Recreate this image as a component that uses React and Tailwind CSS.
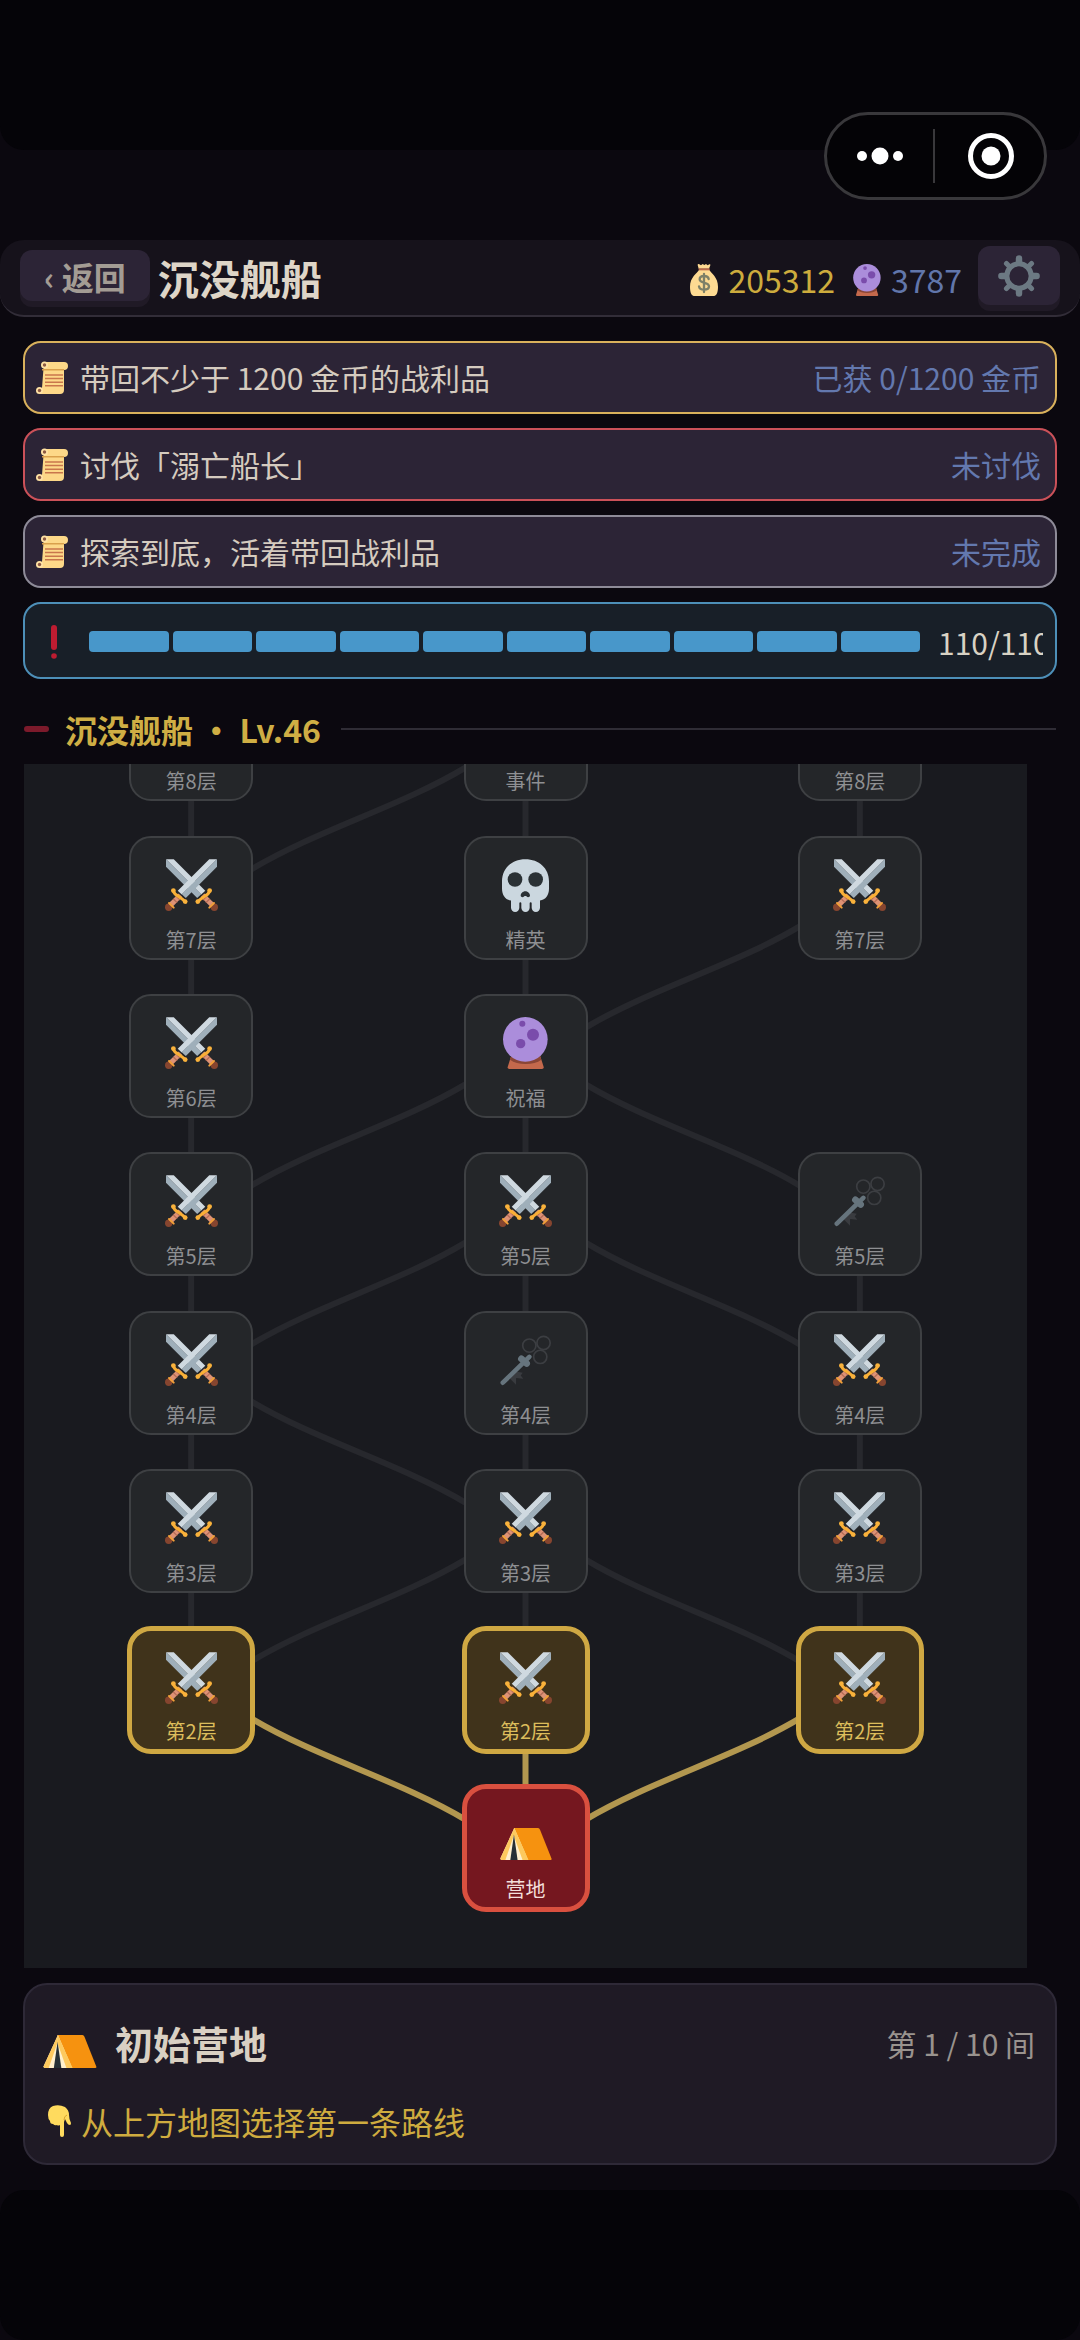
const ROW_PITCH = 158.4;
const MAP_HEIGHT = 1320;
const MAP_WIDTH = 1003;
const BASE_OFFSET = 120;

const quests = [
	{ text: "带回不少于 1200 金币的战利品", status: "已获 0/1200 金币", border: "border-[#d9b15c]" },
	{ text: "讨伐「溺亡船长」", status: "未讨伐", border: "border-[#cb5159]" },
	{ text: "探索到底，活着带回战利品", status: "未完成", border: "border-[#8e8b98]" },
];

const nodes = [
	{ col: 0, floor: 8, type: "battle" },
	{ col: 1, floor: 8, type: "event", label: "事件" },
	{ col: 2, floor: 8, type: "battle" },
	{ col: 0, floor: 7, type: "battle" },
	{ col: 1, floor: 7, type: "elite", label: "精英" },
	{ col: 2, floor: 7, type: "battle" },
	{ col: 0, floor: 6, type: "battle" },
	{ col: 1, floor: 6, type: "blessing", label: "祝福" },
	{ col: 0, floor: 5, type: "battle" },
	{ col: 1, floor: 5, type: "battle" },
	{ col: 2, floor: 5, type: "key" },
	{ col: 0, floor: 4, type: "battle" },
	{ col: 1, floor: 4, type: "key" },
	{ col: 2, floor: 4, type: "battle" },
	{ col: 0, floor: 3, type: "battle" },
	{ col: 1, floor: 3, type: "battle" },
	{ col: 2, floor: 3, type: "battle" },
	{ col: 0, floor: 2, type: "battle", state: "open" },
	{ col: 1, floor: 2, type: "battle", state: "open" },
	{ col: 2, floor: 2, type: "battle", state: "open" },
	{ col: 1, floor: 1, type: "camp", label: "营地", state: "current" },
];

// [from col, from floor, to col, to floor]
const edges = [
	[0, 7, 0, 8], [0, 6, 0, 7], [0, 5, 0, 6], [0, 4, 0, 5], [0, 3, 0, 4], [0, 2, 0, 3],
	[1, 7, 1, 8], [1, 6, 1, 7], [1, 5, 1, 6], [1, 4, 1, 5], [1, 3, 1, 4], [1, 2, 1, 3],
	[2, 7, 2, 8], [2, 4, 2, 5], [2, 3, 2, 4], [2, 2, 2, 3],
	[0, 7, 1, 8], [1, 6, 2, 7], [0, 5, 1, 6], [2, 5, 1, 6], [0, 4, 1, 5], [2, 4, 1, 5],
	[1, 3, 0, 4], [0, 2, 1, 3], [2, 2, 1, 3],
	[1, 1, 0, 2], [1, 1, 1, 2], [1, 1, 2, 2],
];

const nodeX = (col) => (MAP_WIDTH / 6) * (col * 2 + 1);
const nodeY = (floor) => Math.round(MAP_HEIGHT - BASE_OFFSET - (floor - 1) * ROW_PITCH);

const edgePath = ([c1, f1, c2, f2]) => {
	const x1 = nodeX(c1);
	const y1 = nodeY(f1);
	const x2 = nodeX(c2);
	const y2 = nodeY(f2);
	if (c1 === c2) return `M${x1} ${y1}V${y2}`;

	// the curve runs between the sides of the two nodes
	const cut = 0.18;
	const ax = x1 + (x2 - x1) * cut;
	const ay = y1 + (y2 - y1) * cut;
	const bx = x2 - (x2 - x1) * cut;
	const by = y2 - (y2 - y1) * cut;
	const dx = bx - ax;
	const dy = by - ay;
	return `M${ax} ${ay}C${ax + dx * 0.3} ${ay + dy * 0.38} ${bx - dx * 0.3} ${by - dy * 0.38} ${bx} ${by}`;
};

const Sword = () => (
	<>
		<path d="M132 1h23L50 106 38 95z" fill="#cfd9e0" />
		<path d="M155 1v22L62 116 50 105z" fill="#9fafba" />
		<path d="M46 108 18 136" stroke="#dd9275" strokeWidth="15" />
		<path d="M33 110l12 12M25 119l11 11" stroke="#b46b57" strokeWidth="4" />
		<path d="M24 94q4 12 16 17 9 6 22 17" stroke="#f9af36" strokeWidth="9" strokeLinecap="round" fill="none" />
		<circle cx="25" cy="94" r="7" fill="#f9b23c" />
		<circle cx="60" cy="127" r="7" fill="#f9b23c" />
		<circle cx="11" cy="144" r="11" fill="#86452f" />
		<path d="M12 131l14 14" stroke="#f3a13a" strokeWidth="6" strokeLinecap="round" />
	</>
);

const SwordsIcon = ({ className }) => (
	<svg viewBox="0 0 158 155" className={className} aria-hidden="true">
		<g transform="matrix(-1 0 0 1 158 0)">
			<Sword />
		</g>
		<Sword />
	</svg>
);

const SkullIcon = ({ className }) => (
	<svg viewBox="0 0 141 158" className={className} aria-hidden="true">
		<path
			d="M70 0C111 0 141 27 141 66v22c0 20-10 34-27 36v22a12 12 0 0 1-25 0v-14a3 3 0 0 0-6 0v14a12 12 0 0 1-25 0v-14a3 3 0 0 0-6 0v14a12 12 0 0 1-25 0v-22C10 122 0 108 0 88V66C0 27 30 0 70 0z"
			fill="#cbd7df"
		/>
		<circle cx="39" cy="61" r="22" fill="#2a3135" />
		<circle cx="101" cy="61" r="22" fill="#2a3135" />
		<path d="M70 96c8 0 14 7 14 13 0 5-7 7-10 3-2-2-6-2-8 0-3 4-10 2-10-3 0-6 6-13 14-13z" fill="#2a3135" />
	</svg>
);

const CrystalIcon = ({ className }) => (
	<svg viewBox="0 0 135 156" className={className} aria-hidden="true">
		<path d="M26 112h84l12 38q1 6-5 6H19q-6 0-5-6z" fill="#c4694c" />
		<path d="M25 116h86l4 12q-18 13-47 13T21 128z" fill="#8a4636" />
		<circle cx="67" cy="67" r="67" fill="#ab8ddb" />
		<circle cx="58" cy="20" r="9" fill="#7a4cab" />
		<circle cx="90" cy="53" r="18" fill="#7a4cab" />
		<circle cx="53" cy="80" r="14" fill="#7a4cab" />
	</svg>
);

const KeyIcon = ({ className }) => (
	<svg viewBox="0 0 156 154" className={className} aria-hidden="true">
		<g fill="none" stroke="#3c3e42" strokeWidth="5">
			<circle cx="88" cy="32" r="20" />
			<circle cx="131" cy="24" r="20" />
			<circle cx="121" cy="66" r="20" />
		</g>
		<path d="M48 110l20 4-6 8 8 10-22-2v20l-22-22z" fill="#393b3f" />
		<path d="M8 144 88 66" stroke="#66747d" strokeWidth="14" strokeLinecap="round" />
		<path d="M64 72l16 14" stroke="#66747d" strokeWidth="20" strokeLinecap="round" />
	</svg>
);

const TentIcon = ({ className }) => (
	<svg viewBox="0 0 157 97" className={className} aria-hidden="true">
		<path d="M41 0h74q4 0 6 5l35 88q1 4-3 4H84z" fill="#f6920f" />
		<path d="M43 0 1 92q-1 5 4 5h80z" fill="#fff0cd" />
		<path d="M43 0 1 92q-1 5 4 5h11L42 22z" fill="#fdc95e" />
		<path d="M43 0 41 22l27 75h18z" fill="#fdc95e" />
		<path d="M42 20 31 97h22z" fill="#263036" />
	</svg>
);

const ScrollIcon = ({ className }) => (
	<svg viewBox="0 0 32 33" className={className} aria-hidden="true">
		<path d="M8 1h20a3.500 3.500 0 0 1 0 8v20q0 4-4 4H4V27h2z" fill="#fdd888" />
		<path d="M6 8h22v1.500H6z" fill="#d9a04c" />
		<circle cx="8.500" cy="4" r="3.500" fill="#ffe2a4" />
		<circle cx="8.500" cy="4" r="1.700" fill="#8d5a43" />
		<circle cx="3.500" cy="29.500" r="3.500" fill="#ffe2a4" />
		<circle cx="3.500" cy="29.500" r="1.700" fill="#8d5a43" />
		<path d="M9 14h18M9 17.600h18M9 21.200h18M9 24.800h18" stroke="#c9764c" strokeWidth="1.500" />
	</svg>
);

const MoneyIcon = ({ className }) => (
	<svg viewBox="0 0 84 96" className={className} aria-hidden="true">
		<path d="M26 14 23 3q0-4 5-2l5 3 5-4 5 3 5-3 5 4 5-3q4-1 3 3l-4 10z" fill="#fdda92" />
		<path d="M27 18h31c6 10 26 22 26 50 0 20-6 28-14 28H14C6 96 0 88 0 68c0-28 21-40 27-50z" fill="#fdda92" />
		<path d="M26 13h33v6H26z" fill="#b9694a" />
		<path
			d="M56 45c-1-6-6-9-14-9s-13 4-13 10c0 14 28 7 28 21 0 6-6 10-15 10s-14-4-15-10M42 30v54"
			fill="none"
			stroke="#7d8068"
			strokeWidth="7"
			strokeLinecap="round"
		/>
	</svg>
);

const GearIcon = ({ className }) => (
	<svg viewBox="0 0 124 124" className={className} aria-hidden="true">
		<g stroke="#6c7983" fill="none">
			<circle cx="62" cy="62" r="36" strokeWidth="15" />
			<g strokeWidth="19" strokeLinecap="round">
				<path d="M62 10v10M62 104v10M10 62h10M104 62h10" />
				<path d="M25 25l8 8M91 91l8 8M25 99l8-8M91 33l8-8" strokeWidth="15" />
			</g>
		</g>
	</svg>
);

const AlertIcon = ({ className }) => (
	<svg viewBox="0 0 6 34" className={className} aria-hidden="true">
		<rect x="0" y="0" width="6" height="25" rx="3" fill="#bd1c31" />
		<circle cx="3" cy="31" r="2.800" fill="#bd1c31" />
	</svg>
);

const HandIcon = ({ className }) => (
	<svg viewBox="0 0 24 32" className={className} aria-hidden="true">
		<path
			d="M6 1q6-2 12 1 4 3 4 8 0 4 2 8 0 2-1 2-2 0-3-2l-2-4-1 3v13q0 2-2 2t-2-2V20q-2 1-3 0-2 1-4-1-3 0-3-3-2-2-2-6 0-7 5-9z"
			fill="#ffdb5e"
		/>
		<path d="M17 15q0-4 3-5" fill="none" stroke="#d9a52e" strokeWidth="1" />
	</svg>
);

const nodeIcons = {
	battle: <SwordsIcon className="w-[53px] h-[52px]" />,
	event: <KeyIcon className="w-[52px] h-[52px]" />,
	elite: <SkullIcon className="w-[47px] h-[53px]" />,
	blessing: <CrystalIcon className="w-[45px] h-[52px]" />,
	key: <KeyIcon className="w-[52px] h-[51px]" />,
	camp: <TentIcon className="w-[52px] h-[32px] mt-4" />,
};

const nodeStyles = {
	locked: "size-[124px] rounded-[22px] border-2 border-[#3e4043] bg-[#242629] text-[#8e8f92]",
	open: "size-[128px] rounded-[24px] border-[5px] border-[#cfa843] bg-[#40331b] text-[#dcbd5c]",
	current: "size-[128px] rounded-[24px] border-[5px] border-[#d9503f] bg-[#75171f] text-[#f3dfdb]",
};

const MapNode = ({ node }) => (
	<button
		type="button"
		className={`absolute -translate-x-1/2 -translate-y-1/2 cursor-pointer ${nodeStyles[node.state || "locked"]}`}
		style={{ left: `${((node.col * 2 + 1) / 6) * 100}%`, top: nodeY(node.floor) }}
	>
		<span className="flex h-full flex-col items-center justify-between pt-5 pb-1">
			<span className="flex h-[54px] items-center">{nodeIcons[node.type]}</span>
			<span className="text-[20px] leading-7">{node.label || `第${node.floor}层`}</span>
		</span>
	</button>
);

const RouteMap = () => (
	<div className="relative flex-1 min-h-[600px] ml-6 mr-[53px] overflow-hidden bg-[#191a1f]">
		<div className="absolute inset-x-0 bottom-0 h-[1320px]">
			<svg
				viewBox={`0 0 ${MAP_WIDTH} ${MAP_HEIGHT}`}
				preserveAspectRatio="none"
				className="w-full h-full"
				aria-hidden="true"
			>
				{edges.map((edge) => (
					<path
						key={edge.join("-")}
						d={edgePath(edge)}
						fill="none"
						stroke={edge[1] === 1 ? "#b2974f" : "#27282d"}
						strokeWidth="6"
					/>
				))}
			</svg>
			{nodes.map((node) => (
				<MapNode key={`${node.col}-${node.floor}`} node={node} />
			))}
		</div>
	</div>
);

const Header = () => (
	<header className="flex items-center rounded-3xl border-b-2 border-[#322d38] bg-[#16121b] px-5 pt-[6px] pb-[10px]">
		<button
			type="button"
			className="flex h-[51px] items-center rounded-xl bg-[#2c2436] px-6 text-[32px] leading-none font-bold text-[#a39c94] shadow-[0_6px_0_#201a26] cursor-pointer"
		>
			‹ 返回
		</button>
		<h1 className="ml-2 pt-1 text-[41px] leading-[51px] font-bold text-[#ded5c7]">沉没舰船</h1>
		<div className="ml-auto flex items-center gap-[18px] pt-2 text-[32px] leading-[51px]">
			<span className="flex items-center gap-[10px] text-[#cdac3d]">
				<MoneyIcon className="w-7 h-8" />
				205312
			</span>
			<span className="flex items-center gap-[10px] text-[#6176ab]">
				<CrystalIcon className="w-7 h-8" />
				3787
			</span>
		</div>
		<button
			type="button"
			aria-label="设置"
			className="ml-4 flex h-[59px] w-[82px] items-center justify-center rounded-xl bg-[#2c2436] shadow-[0_6px_0_#201a26] cursor-pointer"
		>
			<GearIcon className="size-[42px]" />
		</button>
	</header>
);

const HealthBar = () => (
	<div className="flex h-[77px] items-center overflow-hidden rounded-[18px] border-2 border-[#4d8fb8] bg-[#181f28] pt-[2px] pl-[26px] pr-3">
		<AlertIcon className="w-[6px] h-[34px] shrink-0" />
		<div className="ml-8 flex h-[21px] flex-1 gap-1">
			{Array.from({ length: 10 }, (_, i) => (
				<span key={i} className="flex-1 rounded-[4px] bg-[#4897ca]" />
			))}
		</div>
		<span className="ml-[18px] w-[105px] overflow-hidden text-[30px] leading-10 text-[#d8d2c4]">110/110</span>
	</div>
);

export default function App() {
	return (
		<div className="relative flex min-h-screen flex-col bg-[#0b080f] font-['Noto_Sans_CJK_SC',sans-serif]">
			<div className="h-[150px] rounded-b-3xl bg-[#050408]" />

			{/* Mini program capsule */}
			<div className="absolute top-28 right-[33px] flex h-[88px] w-[223px] items-center rounded-full border-[3px] border-[#39383b] bg-[#040306]">
				<button type="button" aria-label="更多" className="flex flex-1 justify-center cursor-pointer">
					<svg viewBox="0 0 48 18" className="w-12 h-[18px]" fill="#fff" aria-hidden="true">
						<circle cx="6" cy="9" r="5" />
						<circle cx="24" cy="9" r="8.500" />
						<circle cx="42" cy="9" r="5" />
					</svg>
				</button>
				<span className="h-[54px] w-[2px] bg-[#39383b]" />
				<button type="button" aria-label="关闭" className="flex flex-1 justify-center pl-1 cursor-pointer">
					<svg viewBox="0 0 48 48" className="size-12" fill="#fff" aria-hidden="true">
						<circle cx="24" cy="24" r="20.500" fill="none" stroke="#fff" strokeWidth="5" />
						<circle cx="24" cy="24" r="9.500" />
					</svg>
				</button>
			</div>

			<div className="mt-[90px]">
				<Header />
			</div>

			<div className="mx-[23px] mt-6 flex flex-col gap-[14px]">
				{quests.map((quest) => (
					<div
						key={quest.text}
						className={`flex h-[73px] items-center rounded-[18px] border-2 bg-[#2c2436] pb-[2px] pl-[11px] pr-[14px] text-[30px] leading-10 ${quest.border}`}
					>
						<ScrollIcon className="mt-[2px] w-8 h-[33px] shrink-0" />
						<span className="ml-3 text-[#d5cbbf]">{quest.text}</span>
						<span className="ml-auto text-[#6378ae]">{quest.status}</span>
					</div>
				))}
				<HealthBar />
			</div>

			{/* Section title */}
			<div className="mx-6 mt-[26px] mb-[11px] flex items-center">
				<span className="h-[6px] w-[25px] rounded-full bg-[#7c1a2b]" />
				<h2 className="ml-4 text-[32px] leading-[48px] font-bold text-[#cfae44]">沉没舰船 · Lv.46</h2>
				<span className="ml-5 h-[2px] flex-1 bg-[#2f2c35]" />
			</div>

			<RouteMap />

			{/* Current room */}
			<section className="mx-[23px] mt-[15px] mb-[25px] rounded-3xl border-2 border-[#2e2937] bg-[#1f1a25] px-[18px] pt-8 pb-[18px]">
				<div className="flex items-center">
					<TentIcon className="mt-4 w-[54px] h-[33px]" />
					<h3 className="ml-[18px] text-[38px] leading-[52px] font-bold text-[#d9d0c3]">初始营地</h3>
					<span className="ml-auto pr-[2px] text-[30px] leading-10 text-[#99938e]">第 1 / 10 间</span>
				</div>
				<p className="mt-7 flex items-center gap-[10px] pl-1 text-[32px] leading-[48px] text-[#cfac3f]">
					<HandIcon className="w-6 h-8" />
					从上方地图选择第一条路线
				</p>
			</section>

			<div className="h-[150px] rounded-3xl bg-[#050408]" />
		</div>
	);
}
